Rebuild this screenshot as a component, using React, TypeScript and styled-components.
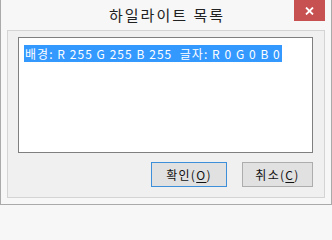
import styled, { createGlobalStyle } from 'styled-components';

const GlobalStyle = createGlobalStyle`
  html, body {
    margin: 0;
    padding: 0;
    background: #f7f7f7;
  }
  body {
    font-family: "Noto Sans CJK KR", "Noto Sans", sans-serif;
  }
`;

const Window = styled.div`
  width: 332px;
  height: 205px;
  box-sizing: border-box;
  background: #f7f7f7;
  border: 1px solid #aaaaaa;
  border-top: none;
  display: flex;
  flex-direction: column;
  padding: 0 6px 6px;
`;

const TitleBar = styled.div`
  position: relative;
  height: 30px;
  flex: none;
  display: flex;
  align-items: center;
  justify-content: center;
`;

const Title = styled.div`
  font-size: 15px;
  color: #222;
  line-height: 30px;
  letter-spacing: 2px;
  padding-left: 2px;
`;

const CloseButton = styled.div`
  position: absolute;
  top: 0;
  right: 0;
  width: 31px;
  height: 21px;
  background: #c75050;
  display: flex;
  align-items: center;
  justify-content: center;
`;

const Client = styled.div`
  flex: 1;
  background: #f0f0f0;
  border: 1px solid #d4d4d4;
  display: flex;
  flex-direction: column;
  padding: 6px 11px 10px 10px;
`;

const ListBox = styled.div`
  height: 116px;
  flex: none;
  box-sizing: border-box;
  background: #fff;
  border: 1px solid #7f7f7f;
  padding: 2px 5px;
`;

const Item = styled.div`
  display: inline-block;
  height: 17px;
  line-height: 17px;
  padding: 0 1px;
  background: #3399ff;
  color: #fff;
  font-size: 12px;
  letter-spacing: 1.05px;
  white-space: pre;
`;

const Buttons = styled.div`
  display: flex;
  justify-content: flex-end;
  align-items: flex-start;
  gap: 15px;
  margin-top: 9px;
`;

const Button = styled.div<{ $primary?: boolean; $width: number }>`
  width: ${({ $width }) => $width}px;
  height: 25px;
  box-sizing: border-box;
  background: #e1e1e1;
  border: 1px solid ${({ $primary }) => ($primary ? '#3c8fd8' : '#adadad')};
  display: flex;
  align-items: center;
  justify-content: center;
  font-size: 12px;
  color: #111;
  letter-spacing: 1.3px;

  u {
    text-underline-offset: 2px;
  }
`;

export default function App() {
  return (
    <>
      <GlobalStyle />
      <Window>
        <TitleBar>
          <Title>하일라이트 목록</Title>
          <CloseButton>
            <svg width="9" height="8" viewBox="0 0 9 8">
              <path d="M1 0.5 L8 7.5 M8 0.5 L1 7.5" stroke="#fff" strokeWidth="1.8" />
            </svg>
          </CloseButton>
        </TitleBar>
        <Client>
          <ListBox>
            <Item>{'배경: R 255 G 255 B 255  글자: R 0 G 0 B 0'}</Item>
          </ListBox>
          <Buttons>
            <Button $primary $width={76}>
              확인(<u>O</u>)
            </Button>
            <Button $width={71}>
              취소(<u>C</u>)
            </Button>
          </Buttons>
        </Client>
      </Window>
    </>
  );
}
